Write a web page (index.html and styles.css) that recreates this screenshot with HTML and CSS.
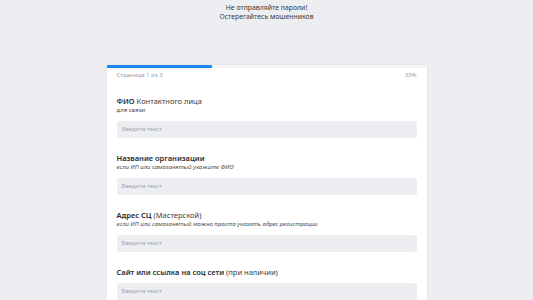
FILE: index.html
```html
<!DOCTYPE html>
<html lang="ru">
<head>
<meta charset="utf-8">
<title>Анкета</title>
<link rel="stylesheet" href="styles.css">
</head>
<body>
<div class="notice">
  <div>Не отправляйте пароли!</div>
  <div>Остерегайтесь мошенников</div>
</div>
<div class="card">
  <div class="progress"><div class="progress-fill" style="width:33%"></div></div>
  <div class="card-head">
    <span>Страница 1 из 3</span>
    <span>33%</span>
  </div>
  <div class="fields">
    <div class="field">
      <div class="label"><b>ФИО</b> Контактного лица</div>
      <div class="hint hint-plain">для связи</div>
      <div class="input">Введите текст</div>
    </div>
    <div class="field">
      <div class="label"><b>Название организации</b></div>
      <div class="hint">если ИП или самозанятый укажите ФИО</div>
      <div class="input">Введите текст</div>
    </div>
    <div class="field">
      <div class="label"><b>Адрес СЦ</b> (Мастерской)</div>
      <div class="hint">если ИП или самозанятый можно просто указать адрес регистрации</div>
      <div class="input">Введите текст</div>
    </div>
    <div class="field">
      <div class="label"><b>Сайт или ссылка на соц сети</b> (при наличии)</div>
      <div class="input">Введите текст</div>
    </div>
  </div>
</div>
</body>
</html>
```
FILE: styles.css
```css
html, body {
  margin: 0;
  padding: 0;
}
body {
  background: #eceef1;
  font-family: "Noto Sans", "Open Sans", sans-serif;
  color: #2a2c30;
  overflow: hidden;
}
.notice {
  text-align: center;
  font-size: 6.9px;
  line-height: 9px;
  padding-top: 3px;
  color: #3a3c40;
}
.card {
  width: 320px;
  margin: 44px auto 0;
  background: #fff;
  box-shadow: 0 0 3px rgba(0, 0, 0, 0.06);
  padding-bottom: 20px;
}
.progress {
  height: 3px;
  background: #f3f4f6;
}
.progress-fill {
  height: 100%;
  background: #1f87ef;
}
.card-head {
  display: flex;
  justify-content: space-between;
  padding: 3px 10px 0;
  font-size: 6px;
  line-height: 8px;
  color: #9a9da2;
}
.fields {
  padding: 0 10px;
}
.field {
  margin-top: 15px;
}
.field:first-child {
  margin-top: 16.5px;
}
.label {
  font-size: 7.5px;
  line-height: 10px;
  color: #3a3c40;
}
.label b {
  font-weight: 600;
  color: #2a2c30;
}
.hint {
  font-size: 6px;
  line-height: 9px;
  font-style: italic;
  color: #4a4d52;
}
.hint-plain {
  font-style: normal;
}
.input {
  margin-top: 6px;
  height: 17px;
  border-radius: 2px;
  background: #eceef1;
  padding-left: 5px;
  font-size: 6px;
  line-height: 17px;
  color: #a3a7ad;
}
```
